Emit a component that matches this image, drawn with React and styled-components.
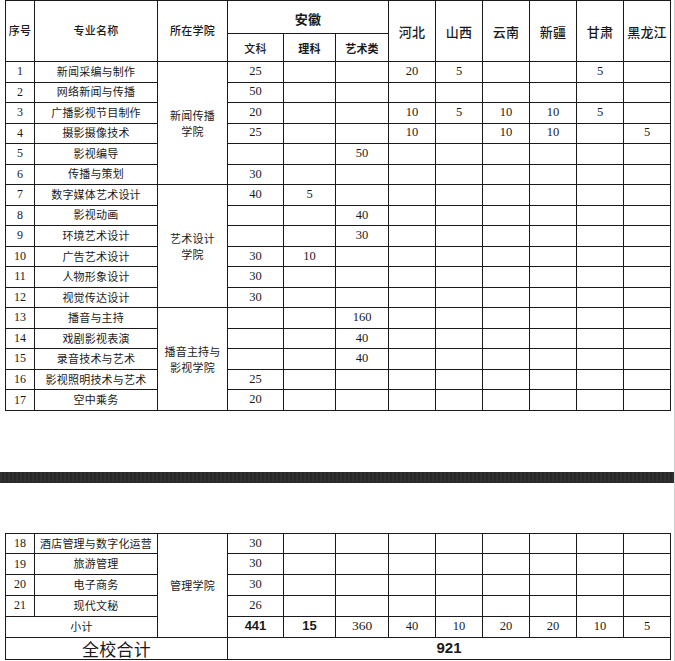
import React from 'react';
import styled, { createGlobalStyle } from 'styled-components';

const Global = createGlobalStyle`
  html, body { margin: 0; padding: 0; background: #fff; }
  body { font-family: "Noto Sans CJK SC", "Liberation Sans", sans-serif; color: #111; }
`;

const Page = styled.div`
  width: 675px;
  height: 661px;
  overflow: hidden;
  background: #fff;
  display: flex;
  flex-direction: column;
  border-right: 1px solid #cfcfcf;
  box-sizing: border-box;
`;

const Sheet = styled.table`
  table-layout: fixed;
  border-collapse: collapse;
  margin-left: 5px;
  width: 666px;
  margin-top: ${(p) => p.$top || 0}px;
`;

const Row = styled.tr`
  height: ${(p) => p.$h}px;
`;

const Cell = styled.td`
  border: 1px solid #1a1a1a;
  padding: ${(p) => (p.$padTop ? `${p.$padTop}px 0 0` : 0)};
  text-align: center;
  vertical-align: middle;
  white-space: nowrap;
  overflow: hidden;
  color: #1a1a1a;
  font-family: ${(p) =>
    p.$num
      ? '"Liberation Serif", serif'
      : p.$arial
      ? '"Liberation Sans", Arial, sans-serif'
      : '"Noto Sans CJK SC", sans-serif'};
  font-size: ${(p) => p.$size || (p.$num ? 12.5 : 11)}px;
  font-weight: ${(p) => (p.$bold ? 700 : p.$medium ? 500 : 400)};
  letter-spacing: ${(p) => (p.$num || p.$arial ? 0 : 0.2)}px;
  line-height: ${(p) => (p.$lh ? `${p.$lh}px` : 1.25)};
`;

const HeadCell = styled(Cell).attrs({ as: 'th' })``;

const Band = styled.div`
  height: 11px;
  margin-top: ${(p) => p.$top}px;
  background: #2c2c2c;
  background-image: repeating-linear-gradient(90deg, #303030 0 2px, #272727 2px 4px);
`;

const cols = [29, 123, 70, 56, 52, 53, 47, 47, 47, 47, 47, 47];

const Cols = () => (
  <colgroup>
    {cols.map((w, i) => (
      <col key={i} style={{ width: w }} />
    ))}
  </colgroup>
);

const provinces = ['河北', '山西', '云南', '新疆', '甘肃', '黑龙江'];

const topGroups = [
  {
    college: ['新闻传播', '学院'],
    rows: [
      ['1', '新闻采编与制作', '25', '', '', '20', '5', '', '', '5', ''],
      ['2', '网络新闻与传播', '50', '', '', '', '', '', '', '', ''],
      ['3', '广播影视节目制作', '20', '', '', '10', '5', '10', '10', '5', ''],
      ['4', '摄影摄像技术', '25', '', '', '10', '', '10', '10', '', '5'],
      ['5', '影视编导', '', '', '50', '', '', '', '', '', ''],
      ['6', '传播与策划', '30', '', '', '', '', '', '', '', ''],
    ],
  },
  {
    college: ['艺术设计', '学院'],
    rows: [
      ['7', '数字媒体艺术设计', '40', '5', '', '', '', '', '', '', ''],
      ['8', '影视动画', '', '', '40', '', '', '', '', '', ''],
      ['9', '环境艺术设计', '', '', '30', '', '', '', '', '', ''],
      ['10', '广告艺术设计', '30', '10', '', '', '', '', '', '', ''],
      ['11', '人物形象设计', '30', '', '', '', '', '', '', '', ''],
      ['12', '视觉传达设计', '30', '', '', '', '', '', '', '', ''],
    ],
  },
  {
    college: ['播音主持与', '影视学院'],
    rows: [
      ['13', '播音与主持', '', '', '160', '', '', '', '', '', ''],
      ['14', '戏剧影视表演', '', '', '40', '', '', '', '', '', ''],
      ['15', '录音技术与艺术', '', '', '40', '', '', '', '', '', ''],
      ['16', '影视照明技术与艺术', '25', '', '', '', '', '', '', '', ''],
      ['17', '空中乘务', '20', '', '', '', '', '', '', '', ''],
    ],
  },
];

const bottomRows = [
  ['18', '酒店管理与数字化运营', '30', '', '', '', '', '', '', '', ''],
  ['19', '旅游管理', '30', '', '', '', '', '', '', '', ''],
  ['20', '电子商务', '30', '', '', '', '', '', '', '', ''],
  ['21', '现代文秘', '26', '', '', '', '', '', '', '', ''],
];

const subtotal = ['441', '15', '360', '40', '10', '20', '20', '10', '5'];

const DataCells = ({ r }) =>
  r.slice(2).map((v, i) => (
    <Cell key={i} $num>
      {v}
    </Cell>
  ));

const College = ({ lines, span }) => (
  <Cell rowSpan={span} $lh={16}>
    {lines.map((l, i) => (
      <React.Fragment key={i}>
        {i > 0 && <br />}
        {l}
      </React.Fragment>
    ))}
  </Cell>
);

const ROW_H = 20.53;

export default function App() {
  return (
    <>
      <Global />
      <Page>
        <Sheet>
          <Cols />
          <thead>
            <Row $h={33}>
              <HeadCell rowSpan={2} $medium>序号</HeadCell>
              <HeadCell rowSpan={2} $medium>专业名称</HeadCell>
              <HeadCell rowSpan={2} $medium>所在学院</HeadCell>
              <HeadCell colSpan={3} $bold $size={13} $padTop={4}>安徽</HeadCell>
              {provinces.map((p) => (
                <HeadCell key={p} rowSpan={2} $medium $size={13} $padTop={3}>
                  {p}
                </HeadCell>
              ))}
            </Row>
            <Row $h={28}>
              <HeadCell $medium $padTop={3}>文科</HeadCell>
              <HeadCell $bold $padTop={3}>理科</HeadCell>
              <HeadCell $bold $padTop={3}>艺术类</HeadCell>
            </Row>
          </thead>
          <tbody>
            {topGroups.map((g) =>
              g.rows.map((r, i) => (
                <Row key={r[0]} $h={ROW_H}>
                  <Cell $num $size={12}>{r[0]}</Cell>
                  <Cell>{r[1]}</Cell>
                  {i === 0 && <College lines={g.college} span={g.rows.length} />}
                  <DataCells r={r} />
                </Row>
              ))
            )}
          </tbody>
        </Sheet>

        <Band $top={61} />

        <Sheet $top={50}>
          <Cols />
          <tbody>
            {bottomRows.map((r, i) => (
              <Row key={r[0]} $h={20.7}>
                <Cell $num $size={12}>{r[0]}</Cell>
                <Cell>{r[1]}</Cell>
                {i === 0 && <College lines={['管理学院']} span={5} />}
                <DataCells r={r} />
              </Row>
            ))}
            <Row $h={21}>
              <Cell colSpan={2}>小计</Cell>
              {subtotal.map((v, i) =>
                i < 2 ? (
                  <Cell key={i} $arial $bold $size={13}>
                    {v}
                  </Cell>
                ) : (
                  <Cell key={i} $num $size={i === 2 ? 13.5 : 12.5}>
                    {v}
                  </Cell>
                )
              )}
            </Row>
            <Row $h={21}>
              <Cell colSpan={3} $size={17}>全校合计</Cell>
              <Cell colSpan={9} $arial $bold $size={15}>921</Cell>
            </Row>
          </tbody>
        </Sheet>
      </Page>
    </>
  );
}
